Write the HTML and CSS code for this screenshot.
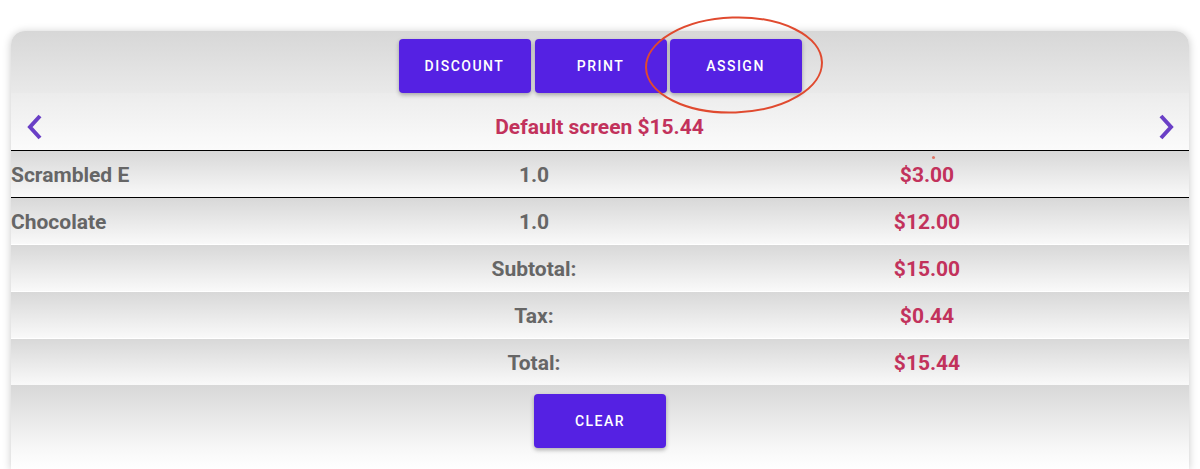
FILE: index.html
```html
<!DOCTYPE html>
<html>
<head>
    <meta charset="utf-8">
    <title>Order</title>
    <link rel="stylesheet" href="styles.css">
</head>
<body>
<div class="card">
    <div class="actions">
        <button class="btn">DISCOUNT</button>
        <button class="btn">PRINT</button>
        <button class="btn">ASSIGN</button>
    </div>
    <div class="nav">
        <svg class="chev" width="20" height="28" viewBox="0 0 20 28"><polyline points="15,3 5,14 15,25" /></svg>
        <h2 class="title">Default screen $15.44</h2>
        <svg class="chev next" width="20" height="28" viewBox="0 0 20 28"><polyline points="5,3 15,14 5,25" /></svg>
    </div>
    <div class="lines">
        <div class="row item">
            <span class="name">Scrambled E</span>
            <span class="mid">1.0</span>
            <span class="price">$3.00</span>
            <span></span>
        </div>
        <div class="row item">
            <span class="name">Chocolate</span>
            <span class="mid">1.0</span>
            <span class="price">$12.00</span>
            <span></span>
        </div>
        <div class="row sum">
            <span></span>
            <span class="mid">Subtotal:</span>
            <span class="price">$15.00</span>
            <span></span>
        </div>
        <div class="row sum">
            <span></span>
            <span class="mid">Tax:</span>
            <span class="price">$0.44</span>
            <span></span>
        </div>
        <div class="row sum">
            <span></span>
            <span class="mid">Total:</span>
            <span class="price">$15.44</span>
            <span></span>
        </div>
    </div>
    <div class="footer">
        <button class="btn">CLEAR</button>
    </div>
    <span class="dot"></span>
</div>
<svg class="circle" width="190" height="104" viewBox="0 0 190 104"><ellipse cx="95" cy="52" rx="88" ry="47.5" transform="rotate(-2 95 52)" /></svg>
</body>
</html>
```

FILE: styles.css
```css
html, body {
    margin: 0;
    padding: 0;
    overflow: hidden;
}

body {
    background: #fff;
    font-family: Roboto, "Liberation Sans", sans-serif;
    height: 469px;
    position: relative;
}

.card {
    position: relative;
    margin: 31px 11px 0;
    height: 438px;
    border-radius: 14px 14px 0 0;
    background: #fff;
    box-shadow: 0 1px 8px rgba(0, 0, 0, 0.22);
    overflow: hidden;
}

.actions {
    display: flex;
    justify-content: center;
    gap: 3px;
    padding-top: 8px;
    background: linear-gradient(#d7d7d7, #fafafa 119px);
}

.btn {
    width: 132px;
    height: 54px;
    border: none;
    border-radius: 4px;
    background: #5521e3;
    color: #fff;
    font: 500 14px Roboto, sans-serif;
    letter-spacing: 1.5px;
    box-shadow: 0 2px 4px rgba(0, 0, 0, 0.3);
    padding: 0;
}

.actions .btn:first-child {
    margin-right: 1px;
}

.nav {
    display: grid;
    grid-template-columns: 1fr auto 1fr;
    align-items: center;
    height: 47px;
    padding: 10px 13px 0 14px;
    background: linear-gradient(#ececec, #fbfbfb);
}

.chev.next {
    justify-self: end;
}

.chev polyline {
    fill: none;
    stroke: #6a3fc6;
    stroke-width: 4;
    stroke-linejoin: miter;
}

.title {
    margin: 0 0 0 -2px;
    font-size: 21px;
    font-weight: 700;
    color: #c2325c;
}

.lines {
    background: #fff;
}

.row {
    display: grid;
    grid-template-columns: 326px 394px 392px 1fr;
    align-items: center;
    height: 46px;
    padding-top: 1px;
    box-sizing: border-box;
    font-size: 21px;
    font-weight: 700;
    color: #666;
    background: linear-gradient(#d8d8d8, #f9f9f9);
}

.row.item {
    height: 47px;
    border-top: 1px solid #000;
}

.row.sum {
    margin-top: 1px;
}

.row.sum:first-of-type {
    margin-top: 0;
}

.mid, .price {
    text-align: center;
}

.price {
    color: #c2325c;
}

.footer {
    display: flex;
    justify-content: center;
    padding-top: 9px;
    height: 76px;
    background: linear-gradient(#d8d8d8, #f6f6f6 60px, #fff);
}

.dot {
    position: absolute;
    left: 921px;
    top: 125px;
    width: 3px;
    height: 3px;
    border-radius: 50%;
    background: #e07464;
}

.circle {
    position: absolute;
    left: 639px;
    top: 13px;
}

.circle ellipse {
    fill: none;
    stroke: #e04a2f;
    stroke-width: 2;
}
```
